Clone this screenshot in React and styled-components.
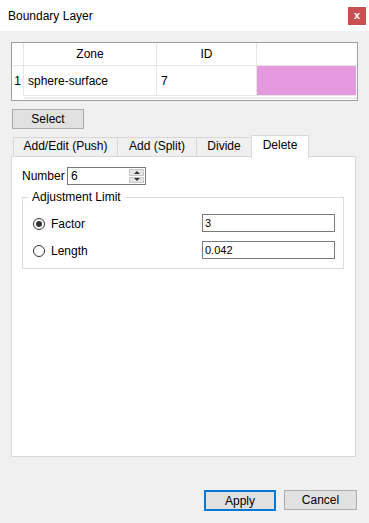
import React from "react";
import styled, { createGlobalStyle } from "styled-components";

const GlobalStyle = createGlobalStyle`
  body {
    margin: 0;
    background: #f0f0f0;
    font-family: "Liberation Sans", Arial, sans-serif;
    font-size: 12px;
    color: #000;
  }
`;

const rows = [{ id: 1, zone: "sphere-surface", zoneId: "7", color: "#e59ae0" }];
const tabs = ["Add/Edit (Push)", "Add (Split)", "Divide", "Delete"];
const tabWidths = [105, 80, 56, 58];

const App = () => {
  return (
    <>
      <GlobalStyle />
      <Window>
        <TitleBar>
          <span>Boundary Layer</span>
          <CloseButton>x</CloseButton>
        </TitleBar>

        <Content>
          <Table>
            <HeadCell />
            <HeadCell>Zone</HeadCell>
            <HeadCell>ID</HeadCell>
            <HeadCell $last />
            {rows.map((row) => (
              <React.Fragment key={row.id}>
                <RowHeader>{row.id}</RowHeader>
                <Cell>{row.zone}</Cell>
                <Cell>{row.zoneId}</Cell>
                <Cell $color={row.color} $last />
              </React.Fragment>
            ))}
            <ScrollStrip />
          </Table>

          <SelectButton $width={72} $height={20}>
            Select
          </SelectButton>

          <TabStrip>
            {tabs.map((t, i) => (
              <Tab key={t} $width={tabWidths[i]} $active={i === 3}>
                {t}
              </Tab>
            ))}
          </TabStrip>

          <Panel>
            <NumberRow>
              <FieldLabel>Number</FieldLabel>
              <Spinner>
                <SpinText>6</SpinText>
                <SpinButtons>
                  <SpinHalf>
                    <Arrow $up />
                  </SpinHalf>
                  <SpinHalf>
                    <Arrow />
                  </SpinHalf>
                </SpinButtons>
              </Spinner>
            </NumberRow>

            <Group>
              <Legend>Adjustment Limit</Legend>
              <OptionRow>
                <Radio $checked />
                <OptionLabel>Factor</OptionLabel>
                <TextBox>3</TextBox>
              </OptionRow>
              <OptionRow>
                <Radio />
                <OptionLabel>Length</OptionLabel>
                <TextBox>0.042</TextBox>
              </OptionRow>
            </Group>
          </Panel>

          <Footer>
            <Button $width={72} $height={21} $primary>
              Apply
            </Button>
            <Button $width={73} $height={20}>
              Cancel
            </Button>
          </Footer>
        </Content>
      </Window>
    </>
  );
};

const Window = styled.div`
  width: 369px;
  height: 523px;
  display: flex;
  flex-direction: column;
  overflow: hidden;
`;

const TitleBar = styled.div`
  height: 31px;
  background: #fff;
  display: flex;
  align-items: center;
  justify-content: space-between;
  padding: 0 3px 0 8px;
  font-size: 12px;
`;

const CloseButton = styled.div`
  width: 18px;
  height: 18px;
  background: #c75050;
  color: #fff;
  font-weight: bold;
  font-size: 11px;
  display: flex;
  align-items: center;
  justify-content: center;
  line-height: 1;
  padding-bottom: 1px;
  box-sizing: border-box;
`;

const Content = styled.div`
  padding: 11px 11px 0 11px;
  display: flex;
  flex-direction: column;
`;

const Table = styled.div`
  width: 347px;
  height: 59px;
  box-sizing: border-box;
  border: 1px solid #a0a0a0;
  background: #fff;
  display: grid;
  grid-template-columns: 12px 133px 100px 1fr;
  grid-template-rows: 23px 30px 1fr;
  margin-bottom: 8px;
`;

const HeadCell = styled.div`
  display: flex;
  align-items: center;
  justify-content: center;
  border-right: ${(p) => (p.$last ? "none" : "1px solid #e6e6e6")};
  border-bottom: 1px solid #e6e6e6;
`;

const RowHeader = styled.div`
  display: flex;
  align-items: center;
  justify-content: flex-end;
  padding-right: 2px;
  border-right: 1px solid #e6e6e6;
`;

const Cell = styled.div`
  display: flex;
  align-items: center;
  padding-left: 4px;
  background: ${(p) => p.$color || "#fff"};
  border-right: ${(p) => (p.$last ? "none" : "1px solid #e6e6e6")};
  border-bottom: 1px solid #e6e6e6;
  margin-right: ${(p) => (p.$last ? "1px" : "0")};
`;

const ScrollStrip = styled.div`
  grid-column: 2 / 5;
  border-top: 2px solid #ececec;
  margin-top: 1px;
`;

const Button = styled.div`
  width: ${(p) => p.$width}px;
  height: ${(p) => p.$height}px;
  box-sizing: border-box;
  background: #e1e1e1;
  border: ${(p) => (p.$primary ? "2px solid #0078d7" : "1px solid #adadad")};
  display: flex;
  align-items: center;
  justify-content: center;
`;

const SelectButton = styled(Button)`
  margin-left: 1px;
`;

const TabStrip = styled.div`
  display: flex;
  align-items: flex-end;
  height: 22px;
  margin: 6px 0 -1px 2px;
  position: relative;
  z-index: 1;
`;

const Tab = styled.div`
  width: ${(p) => p.$width}px;
  height: ${(p) => (p.$active ? 23 : 20)}px;
  box-sizing: border-box;
  display: flex;
  align-items: center;
  justify-content: center;
  padding-bottom: ${(p) => (p.$active ? 4 : 2)}px;
  background: ${(p) => (p.$active ? "#fff" : "#f0f0f0")};
  border: 1px solid #d9d9d9;
  border-bottom: ${(p) => (p.$active ? "none" : "1px solid #d9d9d9")};
  margin-left: -1px;
  margin-bottom: ${(p) => (p.$active ? "-1px" : "0")};
  &:first-child {
    margin-left: 0;
  }
`;

const Panel = styled.div`
  width: 345px;
  height: 301px;
  box-sizing: border-box;
  background: #fff;
  border: 1px solid #d9d9d9;
  padding: 10px 11px 0 10px;
`;

const NumberRow = styled.div`
  display: flex;
  align-items: center;
  height: 18px;
`;

const FieldLabel = styled.span`
  width: 45px;
`;

const Spinner = styled.div`
  width: 79px;
  height: 18px;
  box-sizing: border-box;
  border: 1px solid #7a7a7a;
  display: flex;
  background: #fff;
`;

const SpinText = styled.div`
  flex: 1;
  padding-left: 3px;
  line-height: 16px;
`;

const SpinButtons = styled.div`
  width: 15px;
  display: flex;
  flex-direction: column;
  padding: 1px 1px 1px 0;
  gap: 1px;
`;

const SpinHalf = styled.div`
  flex: 1;
  background: #e5e5e5;
  border: 1px solid #c8c8c8;
  display: flex;
  align-items: center;
  justify-content: center;
`;

const Arrow = styled.div`
  width: 0;
  height: 0;
  border-left: 3px solid transparent;
  border-right: 3px solid transparent;
  ${(p) =>
    p.$up ? "border-bottom: 3px solid #333;" : "border-top: 3px solid #333;"}
`;

const Group = styled.fieldset`
  margin: 5px 0 0 0;
  width: 322px;
  box-sizing: border-box;
  border: 1px solid #dcdcdc;
  padding: 10px 8px 9px 10px;
  display: flex;
  flex-direction: column;
  gap: 9px;
`;

const Legend = styled.legend`
  padding: 0 3px;
  margin-left: -4px;
  line-height: 14px;
`;

const OptionRow = styled.div`
  display: flex;
  align-items: center;
  height: 18px;
`;

const Radio = styled.span`
  width: 12px;
  height: 12px;
  margin-top: 2px;
  box-sizing: border-box;
  border-radius: 50%;
  border: 1px solid #333;
  background: #fff;
  display: flex;
  align-items: center;
  justify-content: center;
  &::after {
    content: "";
    width: 6px;
    height: 6px;
    border-radius: 50%;
    background: ${(p) => (p.$checked ? "#333" : "transparent")};
  }
`;

const OptionLabel = styled.span`
  margin-left: 6px;
  margin-top: 2px;
  width: 151px;
`;

const TextBox = styled.div`
  width: 133px;
  height: 18px;
  box-sizing: border-box;
  border: 1px solid #7a7a7a;
  padding-left: 2px;
  line-height: 16px;
  background: #fff;
  font-size: 11px;
`;

const Footer = styled.div`
  display: flex;
  justify-content: flex-end;
  align-items: flex-start;
  gap: 8px;
  margin-top: 33px;
  margin-right: 1px;
`;

export default App;
